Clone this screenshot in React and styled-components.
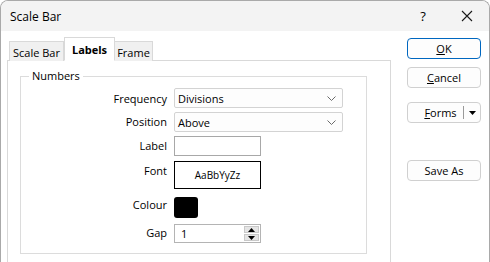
import React from "react";
import styled, { createGlobalStyle } from "styled-components";

const Global = createGlobalStyle`
  html, body {
    margin: 0;
    padding: 0;
    background: #ffffff;
  }
  body {
    font-family: "Open Sans", "Noto Sans", sans-serif;
    font-size: 11px;
    color: #000;
  }
`;

const Window = styled.div`
  width: 490px;
  height: 262px;
  box-sizing: border-box;
  border: 1px solid #a9a9a9;
  border-bottom: none;
  border-radius: 8px 8px 0 0;
  overflow: hidden;
  background: #ffffff;
  display: flex;
  flex-direction: column;
`;

const TitleBar = styled.div`
  height: 30px;
  flex-shrink: 0;
  background: #f3f3f3;
  display: flex;
  align-items: center;
  padding-left: 9px;
`;

const Title = styled.div`
  flex: 1;
  font-size: 12px;
`;

const TitleButton = styled.div`
  width: 44px;
  height: 30px;
  display: flex;
  align-items: center;
  justify-content: center;
  font-size: 13px;
`;

const Body = styled.div`
  flex: 1;
  display: flex;
`;

const TabArea = styled.div`
  margin-left: 6px;
  width: 384px;
  padding-top: 6px;
  display: flex;
  flex-direction: column;
`;

const TabStrip = styled.div`
  display: flex;
  align-items: flex-end;
  padding-left: 2px;
  height: 24px;
  position: relative;
  z-index: 1;
  margin-bottom: -1px;
`;

const Tab = styled.div`
  box-sizing: border-box;
  width: ${(p) => p.$w}px;
  height: ${(p) => (p.$active ? 24 : 20)}px;
  border: 1px solid #d9d9d9;
  border-bottom: ${(p) => (p.$active ? "1px solid #ffffff" : "none")};
  border-left: ${(p) => (p.$first || p.$active ? "1px solid #d9d9d9" : "none")};
  background: ${(p) => (p.$active ? "#ffffff" : "#f0f0f0")};
  font-weight: ${(p) => (p.$active ? 700 : 400)};
  display: flex;
  align-items: center;
  justify-content: center;
  padding-top: ${(p) => (p.$active ? 0 : 1)}px;
`;

const Panel = styled.div`
  height: 220px;
  border: 1px solid #d9d9d9;
  background: #ffffff;
  padding-left: 12px;
  padding-top: 7px;
`;

const Group = styled.fieldset`
  margin: 0;
  width: 347px;
  height: 186px;
  box-sizing: border-box;
  border: 1px solid #dcdcdc;
  padding: 4px 0 0 8px;
`;

const Legend = styled.legend`
  padding: 0 3px;
  line-height: 16px;
`;

const Rows = styled.div`
  display: flex;
  flex-direction: column;
`;

const Row = styled.div`
  display: flex;
  align-items: flex-start;
  margin-top: ${(p) => p.$mt}px;
`;

const Label = styled.div`
  width: 138px;
  margin-right: 7px;
  text-align: right;
  line-height: 15px;
  padding-top: ${(p) => p.$pt}px;
`;

const Select = styled.div`
  box-sizing: border-box;
  width: 169px;
  height: 20px;
  border: 1px solid #d3d3d3;
  border-radius: 2px;
  background: #fdfdfd;
  display: flex;
  align-items: center;
  padding-left: 3px;
  padding-right: 6px;
`;

const SelectText = styled.span`
  flex: 1;
`;

const TextBox = styled.div`
  box-sizing: border-box;
  width: 87px;
  height: 20px;
  border: 1px solid #a8a8a8;
  background: #fff;
`;

const FontBox = styled.div`
  box-sizing: border-box;
  width: 87px;
  height: 28px;
  border: 1px solid #000;
  display: flex;
  align-items: center;
  justify-content: center;
  font-size: 10px;
`;

const Swatch = styled.div`
  width: 24px;
  height: 21px;
  border-radius: 3px;
  background: #000;
`;

const Spin = styled.div`
  box-sizing: border-box;
  width: 87px;
  height: 19px;
  border: 1px solid #b4b4b4;
  display: flex;
  align-items: stretch;
  padding: 1px;
`;

const SpinText = styled.div`
  flex: 1;
  display: flex;
  align-items: center;
  padding-left: 5px;
`;

const SpinButtons = styled.div`
  width: 15px;
  display: flex;
  flex-direction: column;
  gap: 1px;
`;

const SpinButton = styled.div`
  flex: 1;
  background: #e5e5e5;
  border: 1px solid #c9c9c9;
  display: flex;
  align-items: center;
  justify-content: center;
`;

const Side = styled.div`
  margin-left: 16px;
  padding-top: 7px;
  display: flex;
  flex-direction: column;
`;

const Button = styled.div`
  box-sizing: border-box;
  width: 74px;
  height: 21px;
  margin-top: ${(p) => p.$mt || 0}px;
  border: 1px solid ${(p) => (p.$primary ? "#0067c0" : "#d0d0d0")};
  border-radius: 4px;
  background: #fdfdfd;
  display: flex;
  align-items: center;
  justify-content: center;
`;

const SplitMain = styled.div`
  flex: 1;
  text-align: center;
  padding-left: 10px;
`;

const SplitDivider = styled.div`
  width: 1px;
  height: 13px;
  background: #9a9a9a;
`;

const SplitArrow = styled.div`
  width: 16px;
  display: flex;
  justify-content: center;
`;

const Chevron = () => (
  <svg width="9" height="5" viewBox="0 0 9 5">
    <path d="M0.5 0.5 L4.5 4.5 L8.5 0.5" fill="none" stroke="#6a6a6a" strokeWidth="1" />
  </svg>
);

const Triangle = ({ up }) => (
  <svg width="7" height="4" viewBox="0 0 7 4">
    <path d={up ? "M0 4 L3.5 0 L7 4 Z" : "M0 0 L3.5 4 L7 0 Z"} fill="#000" />
  </svg>
);

const Close = () => (
  <svg width="12" height="12" viewBox="0 0 12 12">
    <path d="M1 1 L11 11 M11 1 L1 11" stroke="#1a1a1a" strokeWidth="1.1" />
  </svg>
);

const App = () => {
  return (
    <>
      <Global />
      <Window>
        <TitleBar>
          <Title>Scale Bar</Title>
          <TitleButton>?</TitleButton>
          <TitleButton>
            <Close />
          </TitleButton>
        </TitleBar>
        <Body>
          <TabArea>
            <TabStrip>
              <Tab $first $w={55}>Scale Bar</Tab>
              <Tab $active $w={51}>Labels</Tab>
              <Tab $w={38}>Frame</Tab>
            </TabStrip>
            <Panel>
              <Group>
                <Legend>Numbers</Legend>
                <Rows>
                  <Row $mt={0}>
                    <Label $pt={3}>Frequency</Label>
                    <Select>
                      <SelectText>Divisions</SelectText>
                      <Chevron />
                    </Select>
                  </Row>
                  <Row $mt={4}>
                    <Label $pt={2}>Position</Label>
                    <Select>
                      <SelectText>Above</SelectText>
                      <Chevron />
                    </Select>
                  </Row>
                  <Row $mt={4}>
                    <Label $pt={2}>Label</Label>
                    <TextBox />
                  </Row>
                  <Row $mt={5}>
                    <Label $pt={2}>Font</Label>
                    <FontBox>AaBbYyZz</FontBox>
                  </Row>
                  <Row $mt={8}>
                    <Label $pt={0}>Colour</Label>
                    <Swatch />
                  </Row>
                  <Row $mt={6}>
                    <Label $pt={1}>Gap</Label>
                    <Spin>
                      <SpinText>1</SpinText>
                      <SpinButtons>
                        <SpinButton>
                          <Triangle up />
                        </SpinButton>
                        <SpinButton>
                          <Triangle />
                        </SpinButton>
                      </SpinButtons>
                    </Spin>
                  </Row>
                </Rows>
              </Group>
            </Panel>
          </TabArea>
          <Side>
            <Button $primary>
              <span><u>O</u>K</span>
            </Button>
            <Button $mt={8}>
              <span><u>C</u>ancel</span>
            </Button>
            <Button $mt={14}>
              <SplitMain><u>F</u>orms</SplitMain>
              <SplitDivider />
              <SplitArrow>
                <Triangle />
              </SplitArrow>
            </Button>
            <Button $mt={37}>Save As</Button>
          </Side>
        </Body>
      </Window>
    </>
  );
};

export default App;
